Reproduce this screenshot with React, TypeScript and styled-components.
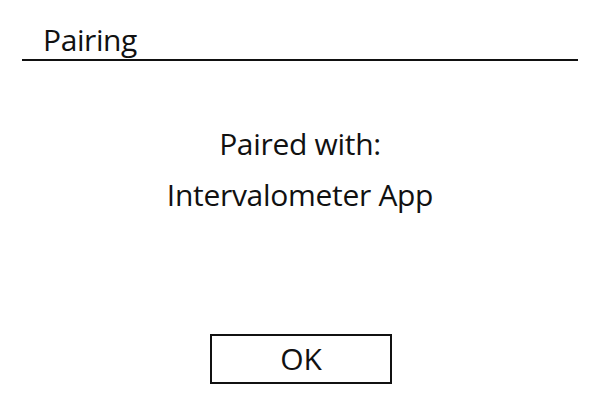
import React from 'react';
import styled, { createGlobalStyle } from 'styled-components';

const GlobalStyle = createGlobalStyle`
  html, body {
    margin: 0;
    padding: 0;
    background: #ffffff;
  }
  body {
    font-family: 'Open Sans', 'Noto Sans', sans-serif;
    color: #111111;
  }
`;

const Screen = styled.div`
  width: 600px;
  height: 400px;
  display: flex;
  flex-direction: column;
  box-sizing: border-box;
`;

const Header = styled.div`
  margin: 0 22px;
  padding: 21px 0 0 21px;
  height: 38px;
  border-bottom: 2px solid #111111;
  font-size: 30px;
  line-height: 38px;
  letter-spacing: -0.4px;
`;

const Message = styled.div`
  margin-top: 57px;
  display: flex;
  flex-direction: column;
  align-items: center;
  font-size: 30px;
  line-height: 51px;
  letter-spacing: -0.3px;
`;

const Footer = styled.div`
  margin-top: 114px;
  display: flex;
  justify-content: center;
`;

const OkButton = styled.button`
  width: 182px;
  height: 50px;
  margin-left: 2px;
  box-sizing: border-box;
  border: 2px solid #111111;
  background: #ffffff;
  color: #111111;
  font-family: 'Open Sans', 'Noto Sans', sans-serif;
  font-size: 30px;
  line-height: 44px;
  padding: 0;
  cursor: pointer;
`;

const App: React.FC = () => {
  return (
    <>
      <GlobalStyle />
      <Screen>
        <Header>Pairing</Header>
        <Message>
          <span>Paired with:</span>
          <span>Intervalometer App</span>
        </Message>
        <Footer>
          <OkButton>OK</OkButton>
        </Footer>
      </Screen>
    </>
  );
};

export default App;
